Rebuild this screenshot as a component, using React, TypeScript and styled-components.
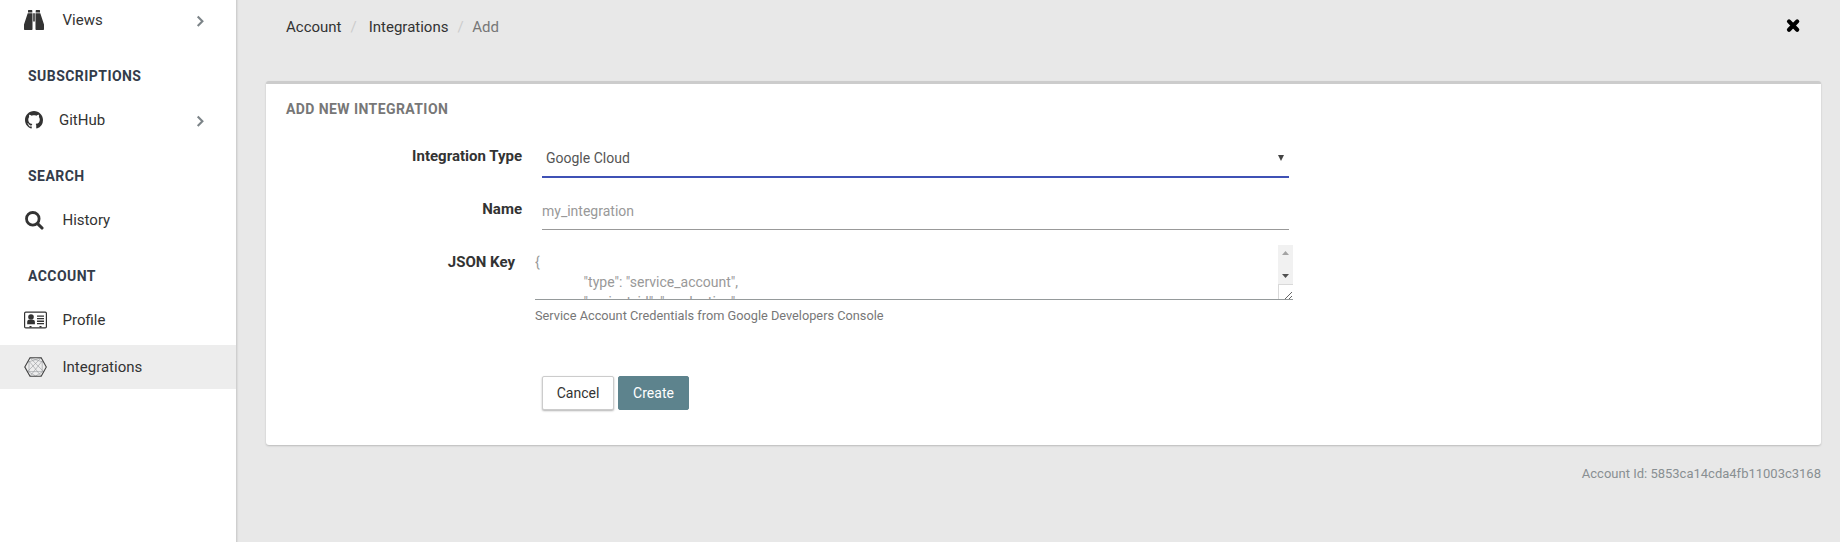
import React from "react";
import styled, { createGlobalStyle } from "styled-components";

const GlobalStyle = createGlobalStyle`
  *, *::before, *::after { box-sizing: border-box; }
  body {
    margin: 0;
    background: #e8e8e8;
    color: #333;
    font: 15px/20px Roboto, "Liberation Sans", sans-serif;
  }
`;

const Page = styled.div`
  display: flex;
  height: 542px;
  overflow: hidden;
`;

const Sidebar = styled.nav`
  flex: none;
  width: 237px;
  background: #fff;
  border-right: 1px solid #cfcfcf;
  box-shadow: 1px 0 1px rgba(0, 0, 0, 0.05);
`;

const NavItem = styled.a<{ $active?: boolean; $first?: boolean }>`
  display: flex;
  align-items: center;
  height: ${(p) => (p.$active ? 44 : p.$first ? 45 : 50)}px;
  padding: 0 32px ${(p) => (p.$first ? 5 : 0)}px 0;
  background: ${(p) => (p.$active ? "#ededed" : "transparent")};
`;

const IconSlot = styled.span<{ $width?: number; $inset?: number }>`
  display: flex;
  flex: none;
  width: ${(p) => p.$width ?? 62.5}px;
  padding-left: ${(p) => p.$inset ?? 24}px;
  color: #333;
`;

const NavLabel = styled.span`
  flex: 1;
`;

const Heading = styled.h4`
  margin: 0;
  padding: 21px 0 0 28px;
  height: 50px;
  font-size: 14px;
  line-height: 20px;
  font-weight: 700;
  letter-spacing: 0.45px;
  color: #333c4a;
`;

const Main = styled.main`
  flex: 1;
  padding: 0 19px 0 29px;
`;

const TopBar = styled.header`
  display: flex;
  align-items: flex-start;
  justify-content: space-between;
  height: 81px;
  padding: 17px 20px 0;
`;

const Crumbs = styled.div`
  display: flex;
`;

const Crumb = styled.span<{ $muted?: boolean }>`
  color: ${(p) => (p.$muted ? "#777" : "#333")};
`;

const Slash = styled.span<{ $after: number }>`
  margin: 0 ${(p) => p.$after}px 0 9px;
  color: #ccc;
`;

const CloseIcon = styled.svg`
  display: block;
  margin-top: 1px;
`;

const Card = styled.section`
  height: 364px;
  padding: 0 20px;
  background: #fff;
  border-top: 3px solid #ccc;
  border-radius: 3px;
  box-shadow: 0 1px 2px rgba(0, 0, 0, 0.2);
`;

const CardTitle = styled.h3`
  margin: 0;
  padding-top: 15px;
  height: 54px;
  font-size: 14px;
  font-weight: 700;
  line-height: 20px;
  letter-spacing: 0.42px;
  color: #777;
`;

const FormRow = styled.div<{ $height: number; $shift?: boolean }>`
  display: flex;
  height: ${(p) => p.$height}px;
  margin-left: ${(p) => (p.$shift ? -7 : 0)}px;
`;

const Label = styled.label<{ $top?: number }>`
  flex: none;
  width: 236px;
  padding-top: ${(p) => p.$top ?? 8}px;
  margin-right: 20px;
  text-align: right;
  font-weight: 700;
`;

const Select = styled.div`
  display: flex;
  align-items: center;
  justify-content: space-between;
  width: 747px;
  height: 40px;
  padding: 2px 5px 0 4px;
  font-size: 14px;
  color: #555;
  border-bottom: 2px solid #3f51b5;
`;

const TextInput = styled.div`
  width: 747px;
  height: 39px;
  padding-top: 10px;
  font-size: 14px;
  color: #999;
  border-bottom: 1px solid #999;
`;

const AreaColumn = styled.div`
  width: 758px;
`;

const TextArea = styled.div`
  display: flex;
  height: 55px;
  border-bottom: 1px solid #959a9b;
`;

const AreaText = styled.pre`
  flex: 1;
  height: 54px;
  margin: 0;
  padding-top: 7px;
  overflow: hidden;
  font: 14px/20px Roboto, "Liberation Sans", sans-serif;
  tab-size: 48.6px;
  color: #999;
`;

const ScrollBar = styled.div`
  display: flex;
  flex-direction: column;
  width: 15px;
`;

const ScrollTrack = styled.div`
  display: flex;
  flex-direction: column;
  align-items: center;
  justify-content: space-between;
  height: 39px;
  padding: 6px 0;
  background: #f1f1f1;
`;

const Resizer = styled.div`
  height: 15px;
  border-top: 1px solid #d9d9d9;
  border-left: 1px solid #d9d9d9;
`;

const Help = styled.div`
  padding-top: 6px;
  font-size: 12.75px;
  color: #777;
`;

const Actions = styled.div`
  display: flex;
  gap: 4px;
  padding-left: 256px;
`;

const Button = styled.button<{ $primary?: boolean }>`
  height: 34px;
  width: ${(p) => (p.$primary ? 71 : 72)}px;
  padding: 0;
  font: 14px/20px Roboto, "Liberation Sans", sans-serif;
  color: ${(p) => (p.$primary ? "#fff" : "#333")};
  background: ${(p) => (p.$primary ? "#5d838d" : "#fff")};
  border: 1px solid ${(p) => (p.$primary ? "#5d838d" : "#ccc")};
  border-radius: 2px;
  box-shadow: ${(p) => (p.$primary ? "none" : "0 1px 2px rgba(0, 0, 0, 0.3)")};
`;

const Footer = styled.footer`
  padding-top: 19px;
  text-align: right;
  font-size: 13px;
  color: #888f92;
`;

const Chevron = () => (
  <svg width="8" height="14" viewBox="0 0 8 14" fill="none" stroke="#7c8488" strokeWidth="2.1">
    <path d="M1.7 3.6 6.4 8.3 1.7 13" />
  </svg>
);

const BinocularsIcon = () => (
  <svg width="20" height="20" viewBox="0 0 20 20" fill="#333">
    <path d="M4 .4Q4 0 4.4 0H7.9Q8.3 0 8.3.4V2.6H4zM11.7.4q0-.4.4-.4h3.5q.4 0 .4.4V2.6h-4.3z" />
    <path d="M3.7 3.3H8.5V19.3Q8.5 20 7.8 20H.7Q0 20 0 19.3V14.6zM16.3 3.3H11.5V19.3q0 .7.7.7h7.1q.7 0 .7-.7V14.6zM9.2 3.3h1.6v8.2H9.2z" />
  </svg>
);

const SearchIcon = () => (
  <svg width="19" height="19" viewBox="0 0 19 19" fill="none" stroke="#333" strokeLinecap="round">
    <circle cx="7.8" cy="7.8" r="6.3" strokeWidth="2.8" />
    <path d="M12.8 12.8 17 17" strokeWidth="3.1" />
  </svg>
);

const GithubIcon = () => (
  <svg width="18" height="18" viewBox="0 0 16 16" fill="#333">
    <path d="M8 0C3.58 0 0 3.58 0 8c0 3.54 2.29 6.53 5.47 7.59.4.07.55-.17.55-.38 0-.19-.01-.82-.01-1.49-2.01.37-2.53-.49-2.69-.94-.09-.23-.48-.94-.82-1.13-.28-.15-.68-.52-.01-.53.63-.01 1.08.58 1.23.82.72 1.21 1.87.87 2.33.66.07-.52.28-.87.51-1.07-1.78-.2-3.64-.89-3.64-3.95 0-.87.31-1.59.82-2.15-.08-.2-.36-1.02.08-2.12 0 0 .67-.21 2.2.82.64-.18 1.32-.27 2-.27s1.36.09 2 .27c1.53-1.04 2.2-.82 2.2-.82.44 1.1.16 1.92.08 2.12.51.56.82 1.27.82 2.15 0 3.07-1.87 3.75-3.65 3.95.29.25.54.73.54 1.48 0 1.07-.01 1.93-.01 2.2 0 .21.15.46.55.38A8.01 8.01 0 0 0 16 8c0-4.42-3.58-8-8-8z" />
  </svg>
);

const ProfileIcon = () => (
  <svg width="23" height="18" viewBox="0 0 23 18" fill="#333">
    <rect x=".6" y="1.1" width="21.8" height="15.8" rx="1.2" fill="none" stroke="#333" strokeWidth="1.2" />
    <circle cx="7" cy="6" r="2.8" />
    <path d="M3.2 13.3V11c0-1.6 1-2.2 2-2.2h3.7c1 0 2 .7 2 2.2v2.3zM13 4.4h7v1.3h-7zM13 7h7v1.3h-7zM13 9.6h7v1.3h-7zM13 12.1h7v1.2h-7zM5.5 15h2v1.5h-2zM15.5 15h2v1.5h-2z" />
  </svg>
);

const HexIcon = () => (
  <svg width="23" height="20" viewBox="0 0 23 20" fill="none">
    <path
      d="M6 .8 20 15M17.2.8 3 15M6 .8 19.8 5.4M17.2.8 3.2 5.4M3 14.6h17M5 4v11l6.6 4M18.2 4v11L11.6 19M.8 10 6 19.2M5 4 17.2 19.2M18.2 4 6 19.2"
      stroke="#979b9d"
      strokeWidth=".6"
    />
    <path d="M6 .8h11.2L22.3 10l-5.1 9.2H6L.8 10z" stroke="#444" strokeWidth="1.1" />
  </svg>
);

const keyPlaceholder = '{\n\t"type": "service_account",\n\t"project_id": "production",';

export default function App() {
  return (
    <>
      <GlobalStyle />
      <Page>
        <Sidebar>
          <NavItem $first>
            <IconSlot><BinocularsIcon /></IconSlot>
            <NavLabel>Views</NavLabel>
            <Chevron />
          </NavItem>
          <Heading>SUBSCRIPTIONS</Heading>
          <NavItem>
            <IconSlot $width={59} $inset={25}><GithubIcon /></IconSlot>
            <NavLabel>GitHub</NavLabel>
            <Chevron />
          </NavItem>
          <Heading>SEARCH</Heading>
          <NavItem>
            <IconSlot $inset={25}><SearchIcon /></IconSlot>
            <NavLabel>History</NavLabel>
          </NavItem>
          <Heading>ACCOUNT</Heading>
          <NavItem>
            <IconSlot><ProfileIcon /></IconSlot>
            <NavLabel>Profile</NavLabel>
          </NavItem>
          <NavItem $active>
            <IconSlot><HexIcon /></IconSlot>
            <NavLabel>Integrations</NavLabel>
          </NavItem>
        </Sidebar>
        <Main>
          <TopBar>
            <Crumbs>
              <Crumb>Account</Crumb>
              <Slash $after={12}>/</Slash>
              <Crumb>Integrations</Crumb>
              <Slash $after={8.5}>/</Slash>
              <Crumb $muted>Add</Crumb>
            </Crumbs>
            <CloseIcon width="15" height="15" viewBox="0 0 15 15" stroke="#000" strokeWidth="4.2" strokeLinecap="round">
              <path d="M3 3.4 11.2 11.8M11.2 3.4 3 11.8" />
            </CloseIcon>
          </TopBar>
          <Card>
            <CardTitle>ADD NEW INTEGRATION</CardTitle>
            <FormRow $height={53}>
              <Label>Integration Type</Label>
              <Select>
                Google Cloud
                <svg width="6" height="6" viewBox="0 0 6 6" fill="#444"><path d="M0 0h6L3 6z" /></svg>
              </Select>
            </FormRow>
            <FormRow $height={54}>
              <Label>Name</Label>
              <TextInput>my_integration</TextInput>
            </FormRow>
            <FormRow $height={131} $shift>
              <Label $top={7}>JSON Key</Label>
              <AreaColumn>
                <TextArea>
                  <AreaText>{keyPlaceholder}</AreaText>
                  <ScrollBar>
                    <ScrollTrack>
                      <svg width="7" height="4" viewBox="0 0 7 4" fill="#a3a3a3"><path d="M3.5 0 7 4H0z" /></svg>
                      <svg width="7" height="4" viewBox="0 0 7 4" fill="#505050"><path d="M0 0h7L3.5 4z" /></svg>
                    </ScrollTrack>
                    <Resizer>
                      <svg width="14" height="14" viewBox="0 0 14 14" stroke="#666" strokeWidth="1"><path d="M6 13l7-7M10 13l3-3" /></svg>
                    </Resizer>
                  </ScrollBar>
                </TextArea>
                <Help>Service Account Credentials from Google Developers Console</Help>
              </AreaColumn>
            </FormRow>
            <Actions>
              <Button>Cancel</Button>
              <Button $primary>Create</Button>
            </Actions>
          </Card>
          <Footer>Account Id: 5853ca14cda4fb11003c3168</Footer>
        </Main>
      </Page>
    </>
  );
}
